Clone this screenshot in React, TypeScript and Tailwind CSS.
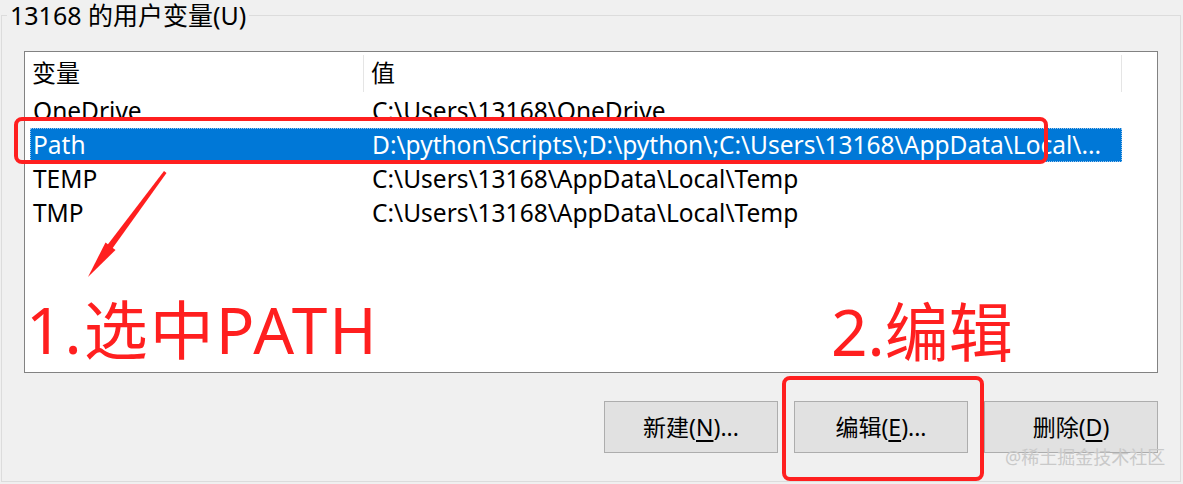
import React from "react";

const rows = [
  { name: "OneDrive", value: "C:\\Users\\13168\\OneDrive" },
  { name: "Path", value: "D:\\python\\Scripts\\;D:\\python\\;C:\\Users\\13168\\AppData\\Local\\...", selected: true },
  { name: "TEMP", value: "C:\\Users\\13168\\AppData\\Local\\Temp" },
  { name: "TMP", value: "C:\\Users\\13168\\AppData\\Local\\Temp" },
];

function Button({ label, hotkey, suffix }: { label: string; hotkey: string; suffix: string }) {
  return (
    <button className="w-[174px] h-[52px] bg-[#e1e1e1] border border-[#adadad] text-[23px] text-black flex items-center justify-center">
      {label}(<span className="underline underline-offset-4">{hotkey}</span>){suffix}
    </button>
  );
}

export default function App() {
  return (
    <div
      className="relative w-[1183px] h-[484px] bg-[#f0f0f0] overflow-hidden text-black"
      style={{ fontFamily: '"Noto Sans", "Noto Sans CJK SC", sans-serif' }}
    >
      <fieldset className="ml-[1px] w-[1180px] h-[482px] border border-[#dcdcdc]">
        <legend className="ml-[5px] px-[3px] text-[25px] leading-[30px]">13168 的用户变量(U)</legend>

        <div className="ml-[22px] mt-[21px] w-[1134px] h-[322px] bg-white border border-[#828282]">
          <div className="flex h-[42px] items-center text-[24px]">
            <div className="w-[339px] h-[37px] flex items-center pl-[7px] border-r border-[#e5e5e5]">变量</div>
            <div className="w-[758px] h-[37px] flex items-center pl-[7px] border-r border-[#e5e5e5]">值</div>
          </div>
          <div className="ml-[5px] text-[24.5px]">
            {rows.map((r) => (
              <div
                key={r.name}
                className={`flex w-[1092px] h-[34px] items-center ${r.selected ? "bg-[#0078d7] text-white outline outline-1 outline-dotted outline-[#9cc6ee] -outline-offset-1" : ""}`}
              >
                <div className="w-[334px] pl-[3px] whitespace-nowrap">{r.name}</div>
                <div className="w-[758px] pl-[8px] whitespace-nowrap overflow-hidden">{r.value}</div>
              </div>
            ))}
          </div>
        </div>

        <div className="ml-[22px] mt-[28px] w-[1134px] flex justify-end gap-[16px]">
          <Button label="新建" hotkey="N" suffix="..." />
          <Button label="编辑" hotkey="E" suffix="..." />
          <Button label="删除" hotkey="D" suffix="" />
        </div>
      </fieldset>

      {/* annotations over the dialog */}
      <div className="absolute left-[14px] top-[117px] w-[1034px] h-[47px] border-[4px] border-[#ff1f1f] rounded-[8px]" />
      <div className="absolute left-[782px] top-[376px] w-[202px] h-[105px] border-[4px] border-[#ff1f1f] rounded-[8px]" />

      <svg className="absolute left-0 top-0" width="1183" height="484">
        <polygon points="164,171 166.5,173 112,249 107,245.5" fill="#ff1f1f" />
        <polygon points="88,277 105.5,242.5 115.5,250" fill="#ff1f1f" />
      </svg>

      <div className="absolute left-[26px] top-[290px] text-[64px] leading-[80px] tracking-[2px] text-[#ff1f1f] whitespace-nowrap">
        1.选中PATH
      </div>
      <div className="absolute left-[831px] top-[292px] text-[64px] leading-[80px] text-[#ff1f1f] whitespace-nowrap">
        2.编辑
      </div>

      <div className="absolute left-[1005px] top-[446px] text-[18px] leading-[22px] text-[#c9c9c9] whitespace-nowrap">
        @稀土掘金技术社区
      </div>
    </div>
  );
}
